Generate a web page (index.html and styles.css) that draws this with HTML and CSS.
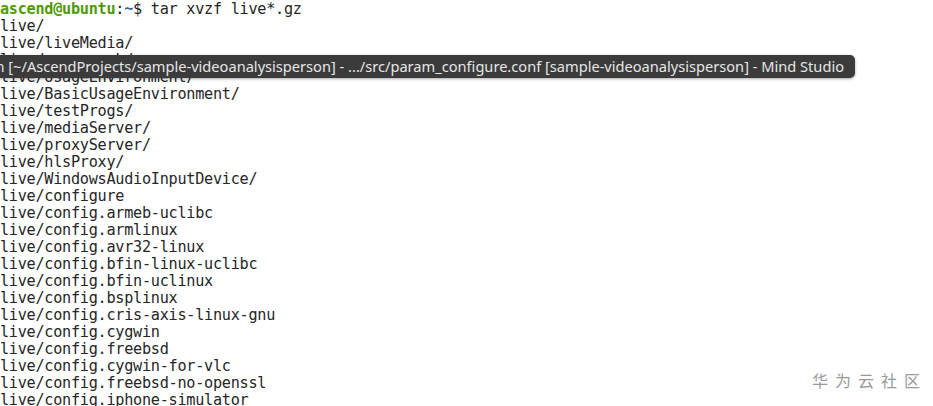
FILE: index.html
```html
<!DOCTYPE html>
<html>
<head>
<meta charset="utf-8">
<link rel="stylesheet" href="styles.css">
</head>
<body>
<div class="screen">
<pre class="term"><span class="user">ascend@ubuntu</span>:<span class="path">~</span>$ tar xvzf live*.gz
live/
live/liveMedia/
live/groupsock/
live/UsageEnvironment/
live/BasicUsageEnvironment/
live/testProgs/
live/mediaServer/
live/proxyServer/
live/hlsProxy/
live/WindowsAudioInputDevice/
live/configure
live/config.armeb-uclibc
live/config.armlinux
live/config.avr32-linux
live/config.bfin-linux-uclibc
live/config.bfin-uclinux
live/config.bsplinux
live/config.cris-axis-linux-gnu
live/config.cygwin
live/config.freebsd
live/config.cygwin-for-vlc
live/config.freebsd-no-openssl
live/config.iphone-simulator</pre>
<div class="tooltip">sample-videoanalysisperson [~/AscendProjects/sample-videoanalysisperson] - .../src/param_configure.conf [sample-videoanalysisperson] - Mind Studio</div>
<div class="watermark">华为云社区</div>
</div>
</body>
</html>
```
FILE: styles.css
```css
html, body {
  margin: 0;
  padding: 0;
  background: #ffffff;
}
.screen {
  position: relative;
  width: 933px;
  height: 406px;
  overflow: hidden;
  background: #ffffff;
}
.term {
  margin: 0;
  padding: 1px 0 0 0;
  font-family: "DejaVu Sans Mono", "Liberation Mono", monospace;
  font-size: 15.2px;
  letter-spacing: -0.27px;
  line-height: 17px;
  color: #262626;
  white-space: pre;
}
.user {
  color: #4e9a06;
  font-weight: bold;
}
.path {
  color: #3465a4;
  font-weight: bold;
}
.tooltip {
  position: absolute;
  top: 55px;
  right: 78px;
  height: 23px;
  line-height: 23px;
  padding: 0 11px 0 10px;
  white-space: nowrap;
  background: #3b3b3b;
  color: #e6e6e6;
  border-radius: 5px;
  box-shadow: 0 1px 3px rgba(0,0,0,0.35);
  font-family: "Noto Sans", "Open Sans", sans-serif;
  font-size: 14.62px;
}
.watermark {
  position: absolute;
  right: 6px;
  bottom: 14px;
  font-family: "Noto Sans CJK SC", sans-serif;
  font-size: 16px;
  letter-spacing: 7px;
  color: #9a9a9a;
}
```
